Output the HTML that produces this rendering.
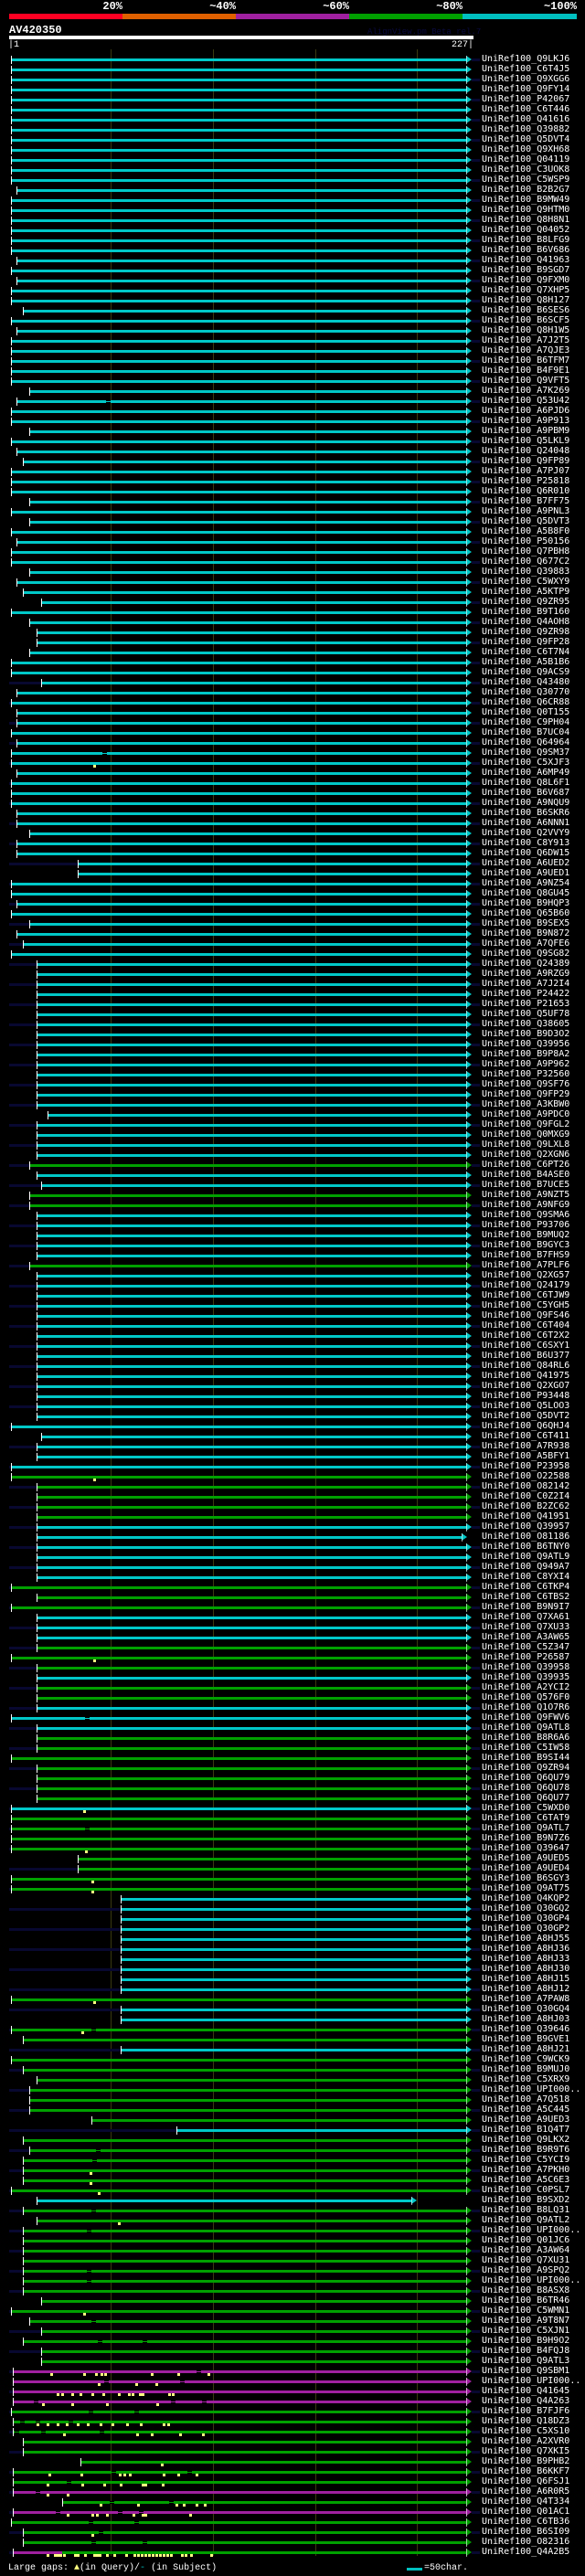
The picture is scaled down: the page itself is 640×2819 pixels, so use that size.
<!DOCTYPE html>
<html><head><meta charset="utf-8">
<style>
html,body{margin:0;padding:0;background:#000;}
body{width:640px;height:2819px;position:relative;overflow:hidden;font-family:"Liberation Mono",monospace;color:#fff;}
.abs{position:absolute;}
.pct{position:absolute;top:0;font-weight:bold;font-size:12px;line-height:14px;text-align:right;width:60px;}
.seg{position:absolute;top:15px;height:6px;}
.grid{position:absolute;top:54px;height:2743px;width:1px;background:#3a3a10;}
pre{margin:0;}
#labels{position:absolute;left:527px;top:59px;font-size:10px;line-height:11px;white-space:pre;color:#fff;}
</style></head><body>
<div class="pct" style="left:74px">20%</div>
<div class="pct" style="left:198px">~40%</div>
<div class="pct" style="left:322px">~60%</div>
<div class="pct" style="left:446px">~80%</div>
<div class="pct" style="left:571px">~100%</div>
<div class="seg" style="left:10px;width:124px;background:#ff0022"></div>
<div class="seg" style="left:134px;width:124px;background:#e06000"></div>
<div class="seg" style="left:258px;width:124px;background:#a020a0"></div>
<div class="seg" style="left:382px;width:124px;background:#00a000"></div>
<div class="seg" style="left:506px;width:125px;background:#00c0c0"></div>
<div class="abs" style="left:10px;top:26px;font-size:12px;font-weight:bold;line-height:14px">AV420350</div>
<div class="abs" style="left:402px;top:30px;font-size:9px;line-height:10px;color:#0a0a40">AlignView.pm Beta rel.7</div>
<div class="abs" style="left:10px;top:39px;width:508px;height:4px;background:#fff"></div>
<div class="abs" style="left:9px;top:44px;font-size:10px;line-height:12px">|1</div>
<div class="abs" style="left:494px;top:44px;font-size:10px;line-height:12px">227|</div>
<div class="grid" style="left:121px"></div>
<div class="grid" style="left:233px"></div>
<div class="grid" style="left:345px"></div>
<div class="grid" style="left:456px"></div>
<div id="rows"></div>
<pre id="labels">UniRef100_Q9LKJ6
UniRef100_C6T4J5
UniRef100_Q9XGG6
UniRef100_Q9FY14
UniRef100_P42067
UniRef100_C6T446
UniRef100_Q41616
UniRef100_Q39882
UniRef100_Q5DVT4
UniRef100_Q9XH68
UniRef100_Q04119
UniRef100_C3UOK8
UniRef100_C5WSP9
UniRef100_B2B2G7
UniRef100_B9MW49
UniRef100_Q9HTM0
UniRef100_Q8H8N1
UniRef100_Q04052
UniRef100_B8LFG9
UniRef100_B6V686
UniRef100_Q41963
UniRef100_B9SGD7
UniRef100_Q9FXM0
UniRef100_Q7XHP5
UniRef100_Q8H127
UniRef100_B6SES6
UniRef100_B6SCF5
UniRef100_Q8H1W5
UniRef100_A7J2T5
UniRef100_A7QJE3
UniRef100_B6TFM7
UniRef100_B4F9E1
UniRef100_Q9VFT5
UniRef100_A7K269
UniRef100_Q53U42
UniRef100_A6PJD6
UniRef100_A9P913
UniRef100_A9PBM9
UniRef100_Q5LKL9
UniRef100_Q24048
UniRef100_Q9FP89
UniRef100_A7PJ07
UniRef100_P25818
UniRef100_Q6R010
UniRef100_B7FF75
UniRef100_A9PNL3
UniRef100_Q5DVT3
UniRef100_A5B8F0
UniRef100_P50156
UniRef100_Q7PBH8
UniRef100_Q677C2
UniRef100_Q39883
UniRef100_C5WXY9
UniRef100_A5KTP9
UniRef100_Q9ZR95
UniRef100_B9T160
UniRef100_Q4AOH8
UniRef100_Q9ZR98
UniRef100_Q9FP28
UniRef100_C6T7N4
UniRef100_A5B1B6
UniRef100_Q9ACS9
UniRef100_Q43480
UniRef100_Q30770
UniRef100_Q6CR88
UniRef100_Q0T155
UniRef100_C9PH04
UniRef100_B7UC04
UniRef100_Q64964
UniRef100_Q9SM37
UniRef100_C5XJF3
UniRef100_A6MP49
UniRef100_Q8L6F1
UniRef100_B6V687
UniRef100_A9NQU9
UniRef100_B6SKR6
UniRef100_A6NNN1
UniRef100_Q2VVY9
UniRef100_C8Y913
UniRef100_Q6DW15
UniRef100_A6UED2
UniRef100_A9UED1
UniRef100_A9NZ54
UniRef100_Q8GU45
UniRef100_B9HQP3
UniRef100_Q65B60
UniRef100_B9SEX5
UniRef100_B9N872
UniRef100_A7QFE6
UniRef100_Q9SG82
UniRef100_Q24389
UniRef100_A9RZG9
UniRef100_A7J2I4
UniRef100_P24422
UniRef100_P21653
UniRef100_Q5UF78
UniRef100_Q38605
UniRef100_B9D3O2
UniRef100_Q39956
UniRef100_B9P8A2
UniRef100_A9P962
UniRef100_P32560
UniRef100_Q9SF76
UniRef100_Q9FP29
UniRef100_A3KBW0
UniRef100_A9PDC0
UniRef100_Q9FGL2
UniRef100_Q0MXG9
UniRef100_Q9LXL8
UniRef100_Q2XGN6
UniRef100_C6PT26
UniRef100_B4ASE0
UniRef100_B7UCE5
UniRef100_A9NZT5
UniRef100_A9NFG9
UniRef100_Q9SMA6
UniRef100_P93706
UniRef100_B9MUQ2
UniRef100_B9GYC3
UniRef100_B7FHS9
UniRef100_A7PLF6
UniRef100_Q2XG57
UniRef100_Q24179
UniRef100_C6TJW9
UniRef100_C5YGH5
UniRef100_Q9FS46
UniRef100_C6T404
UniRef100_C6T2X2
UniRef100_C6SXY1
UniRef100_B6U377
UniRef100_Q84RL6
UniRef100_Q41975
UniRef100_Q2XGO7
UniRef100_P93448
UniRef100_Q5LOO3
UniRef100_Q5DVT2
UniRef100_Q6QHJ4
UniRef100_C6T411
UniRef100_A7R938
UniRef100_A5BFY1
UniRef100_P23958
UniRef100_O22588
UniRef100_O82142
UniRef100_C0Z2I4
UniRef100_B2ZC62
UniRef100_Q41951
UniRef100_Q39957
UniRef100_O81186
UniRef100_B6TNY0
UniRef100_Q9ATL9
UniRef100_Q949A7
UniRef100_C8YXI4
UniRef100_C6TKP4
UniRef100_C6TBS2
UniRef100_B9N9I7
UniRef100_Q7XA61
UniRef100_Q7XU33
UniRef100_A3AW65
UniRef100_C5Z347
UniRef100_P26587
UniRef100_Q39958
UniRef100_Q39935
UniRef100_A2YCI2
UniRef100_Q576F0
UniRef100_Q1O7R6
UniRef100_Q9FWV6
UniRef100_Q9ATL8
UniRef100_B8R6A6
UniRef100_C5IW58
UniRef100_B9SI44
UniRef100_Q9ZR94
UniRef100_Q6QU79
UniRef100_Q6QU78
UniRef100_Q6QU77
UniRef100_C5WXD0
UniRef100_C6TAT9
UniRef100_Q9ATL7
UniRef100_B9N7Z6
UniRef100_Q39647
UniRef100_A9UED5
UniRef100_A9UED4
UniRef100_B6SGY3
UniRef100_Q9AT75
UniRef100_Q4KQP2
UniRef100_Q30GQ2
UniRef100_Q30GP4
UniRef100_Q30GP2
UniRef100_A8HJ55
UniRef100_A8HJ36
UniRef100_A8HJ33
UniRef100_A8HJ30
UniRef100_A8HJ15
UniRef100_A8HJ12
UniRef100_A7PAW8
UniRef100_Q30GQ4
UniRef100_A8HJ03
UniRef100_Q39646
UniRef100_B9GVE1
UniRef100_A8HJ21
UniRef100_C9WCK9
UniRef100_B9MUJ0
UniRef100_C5XRX9
UniRef100_UPI000..
UniRef100_A7Q518
UniRef100_A5C445
UniRef100_A9UED3
UniRef100_B1Q4T7
UniRef100_Q9LKX2
UniRef100_B9R9T6
UniRef100_C5YCI9
UniRef100_A7PKH0
UniRef100_A5C6E3
UniRef100_C0PSL7
UniRef100_B9SXD2
UniRef100_B8LQ31
UniRef100_Q9ATL2
UniRef100_UPI000..
UniRef100_Q01JC6
UniRef100_A3AW64
UniRef100_Q7XU31
UniRef100_A9SPQ2
UniRef100_UPI000..
UniRef100_B8ASX8
UniRef100_B6TR46
UniRef100_C5WMN1
UniRef100_A9T8N7
UniRef100_C5XJN1
UniRef100_B9H9O2
UniRef100_B4FQJ8
UniRef100_Q9ATL3
UniRef100_Q9SBM1
UniRef100_UPI000..
UniRef100_Q41645
UniRef100_Q4A263
UniRef100_B7FJF6
UniRef100_Q18DZ3
UniRef100_C5XS10
UniRef100_A2XVR0
UniRef100_Q7XKI5
UniRef100_B9PHB2
UniRef100_B6KKF7
UniRef100_Q6FSJ1
UniRef100_A6R0R5
UniRef100_Q4T334
UniRef100_Q01AC1
UniRef100_C6TB36
UniRef100_B6SI09
UniRef100_O82316
UniRef100_Q4A2B5</pre>
<div class="abs" style="left:9px;top:2805px;font-size:10px;line-height:12px">Large gaps: <span style="color:#ffff80">&#9650;</span>(in Query)/<span style="color:#00c0c0">-</span> (in Subject)</div>
<div class="abs" style="left:445px;top:2810px;width:17px;height:3px;background:#00c0c0"></div>
<div class="abs" style="left:464px;top:2805px;font-size:10px;line-height:12px">=50char.</div>
<script>
(function(){
var S="aaaaaaaaaaaaa"+"b"+"aaaaaa"+"bab"+"aacab"+"aaaaa"+"dbaa"+"dabc"+"aaa"+"dada"+"baa"+"dbcf"+"adeed"+"aafba"+"bbab"+"aab"+"aaa"+"bbdbb"+"hhaaba"+"dbca"+"eeeeeeeeeeeeeee"+"geeee"+"defdd"+"eeeee"+"d"+"eeeeeeeeeeeeeee"+"afeeaa"+"eeeeeeeeee"+"aea"+"eeee"+"a"+"eeeee"+"aeee"+"aeeee"+"aaaaa"+"hhaa"+"jjjjjjjjjj"+"ajjacj"+"aceddd"+"lkcd"+"cccae"+"ce"+"ccccccc"+"fadfcff"+"ooooaoo"+"ccmooon"+"oacco";
var X={a:12,b:18,c:25,d:32,e:40,f:45,g:52,h:85,j:132,k:193,l:100,m:88,n:68,o:14};
var C="C".repeat(110)+"GCCGG"+"CCCCC"+"G"+"C".repeat(15)+"CCCCC"+"GGGGG"+"CCCCCC"+"GGG"+"CCC"+"GGG"+"C"+"GG"+"CCC"+"GGGGGGG"+"C"+"GGGGGGGG"+"C".repeat(10)+"G"+"CC"+"GG"+"C"+"GGGGGGG"+"C"+"GGGGGG"+"C"+"G".repeat(16)+"MMMM"+"GGGGGGGG"+"M"+"G"+"M"+"GGGG";
var col={C:"#00c8c8",G:"#00a000",M:"#a020a0"};
var ends={147:505,213:450};
var marks={70:[102],141:[102],159:[102],174:[91],178:[93],181:[100],182:[100],193:[102],196:[89],210:[98],211:[98],212:[107],215:[129],224:[91],
230:[55,91,104,110,114,165,194,227],231:[107,148,170],232:[62,67,78,87,100,112,129,140,144,152,155,184,188],233:[46,78,116,171],
235:[40,51,62,72,84,95,109,122,138,153,178,183],236:[69,149,165,196,221],239:[176],240:[53,88,135,130,141,178,194,214],241:[51,89,113,131,155,158,177],
242:[51,73],243:[109,150,192,200,214,223],244:[73,100,105,116,145,155,158,207],246:[100],248:[51,59,62,65,69,81,84,92,102,105,108,116,124,137,146,150,154,158,162,166,170,174,178,182,186,198,202,208,230]};
var gaps={34:[116],69:[112],165:[93],176:[93],196:[100],208:[105],209:[101],214:[100],216:[95],220:[95],221:[95],225:[100],227:[107,156],
230:[215],231:[114,197],233:[37,187,221],234:[97,147],235:[22,39,75],236:[16,45,109],240:[122,205],241:[73],242:[39],243:[120,185],244:[61,129,152],245:[97,147],246:[108],247:[100,156]};
var h="";
for(var i=0;i<249;i++){
 var y=65+11*i, s=X[S.charAt(i)]||12, c=col[C.charAt(i)]||"#00c8c8", e=ends[i]||510;
 if(i%2==0 && i>60) h+='<div class="abs" style="left:10px;top:'+(y-1)+'px;width:'+(s-10)+'px;height:3px;background:#080830"></div>';
 if(i%2==0) h+='<div class="abs" style="left:'+(e+6)+'px;top:'+(y-1)+'px;width:9px;height:3px;background:#080830"></div>';
 h+='<div class="abs" style="left:'+s+'px;top:'+(y-1)+'px;width:'+(e-s)+'px;height:3px;background:'+c+'"></div>';
 if(i==248) h+='<div class="abs" style="left:14px;top:'+(y-1)+'px;width:54px;height:3px;background:#a020a0"></div>';
 (gaps[i]||[]).forEach(function(g){h+='<div class="abs" style="left:'+g+'px;top:'+(y-1)+'px;width:5px;height:3px;background:#000"></div><div class="abs" style="left:'+g+'px;top:'+y+'px;width:5px;height:1px;background:'+c+'"></div>';});
 h+='<div class="abs" style="left:'+s+'px;top:'+(y-4)+'px;width:1px;height:9px;background:#fff"></div>';
 h+='<div class="abs" style="left:'+e+'px;top:'+(y-4)+'px;width:0;height:0;border-top:4.5px solid transparent;border-bottom:4.5px solid transparent;border-left:6px solid '+c+'"></div>';
 h+='<div class="abs" style="left:'+(e)+'px;top:'+(y-4)+'px;width:1px;height:9px;background:#fff;opacity:.6"></div>';
 (marks[i]||[]).forEach(function(m){h+='<div class="abs" style="left:'+m+'px;top:'+(y+2)+'px;width:3px;height:3px;background:#ffff80"></div>';});
}
document.getElementById("rows").innerHTML=h;
})();
</script>
</body></html>
